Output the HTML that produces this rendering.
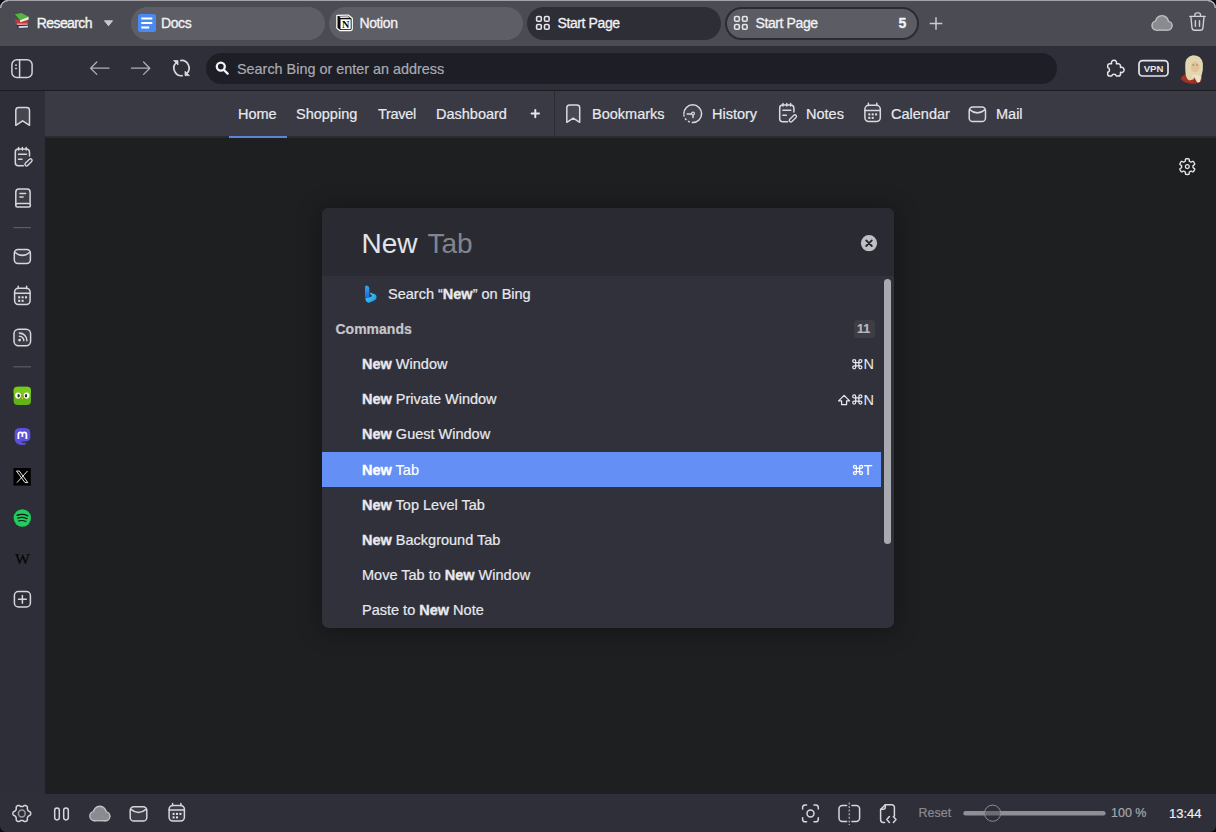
<!DOCTYPE html>
<html><head><meta charset="utf-8">
<style>
*{box-sizing:border-box;margin:0;padding:0}
html,body{width:1216px;height:832px;overflow:hidden;background:#1e1f21;font-family:"Liberation Sans",sans-serif;color:#e6e7ec}
.a{position:absolute}
.t{position:absolute;white-space:nowrap;-webkit-text-stroke:0.2px currentColor}
.t b{-webkit-text-stroke:0.35px currentColor}
#ov{position:absolute;left:0;top:0;width:1216px;height:832px}
</style></head><body>
<!-- backgrounds -->
<div class="a" style="left:0;top:0;width:1216px;height:46px;background:#4b4b53"></div>
<div class="a" style="left:0;top:0;width:1216px;height:1px;background:#a3a3a8"></div>
<div class="a" style="left:0;top:46px;width:1216px;height:44px;background:#2e2f38"></div>
<div class="a" style="left:0;top:90px;width:1216px;height:1px;background:#1b1c21"></div>
<div class="a" style="left:0;top:91px;width:45px;height:703px;background:#2d2e37"></div>
<div class="a" style="left:45px;top:91px;width:1171px;height:45px;background:#393a44"></div>
<div class="a" style="left:45px;top:136px;width:1171px;height:2px;background:#2a2b31"></div>
<div class="a" style="left:45px;top:138px;width:1171px;height:656px;background:#1e1f21"></div>
<div class="a" style="left:0;top:794px;width:1216px;height:38px;background:#2e2f38"></div>

<!-- tabs -->
<div class="a" style="left:131px;top:6.5px;width:194px;height:33px;border-radius:16.5px;background:#5d5e66"></div>
<div class="a" style="left:329px;top:6.5px;width:194px;height:33px;border-radius:16.5px;background:#5d5e66"></div>
<div class="a" style="left:527px;top:6.5px;width:194px;height:33px;border-radius:16.5px;background:#2d2e36"></div>
<div class="a" style="left:725px;top:6.5px;width:194px;height:33px;border-radius:16.5px;background:#5b5c64;border:2px solid #2b2b31"></div>
<div class="t" style="left:36.8px;top:16.2px;font-size:14px;line-height:14px;letter-spacing:-0.6px;color:#f4f4f6;-webkit-text-stroke:0.35px #f4f4f6">Research</div>
<div class="t" style="left:161px;top:16.15px;font-size:14px;line-height:14px;letter-spacing:-0.4px;color:#f2f2f5;-webkit-text-stroke:0.3px #f2f2f5">Docs</div>
<div class="t" style="left:359.5px;top:16.15px;font-size:14px;line-height:14px;letter-spacing:-0.4px;color:#f2f2f5;-webkit-text-stroke:0.3px #f2f2f5">Notion</div>
<div class="t" style="left:557.5px;top:16.15px;font-size:14px;line-height:14px;letter-spacing:-0.4px;color:#f2f2f5;-webkit-text-stroke:0.3px #f2f2f5">Start Page</div>
<div class="t" style="left:755.5px;top:16.15px;font-size:14px;line-height:14px;letter-spacing:-0.4px;color:#f2f2f5;-webkit-text-stroke:0.3px #f2f2f5">Start Page</div>
<div class="t" style="left:898.5px;top:16.15px;font-size:14px;line-height:14px;letter-spacing:-0.4px;color:#f2f2f5;-webkit-text-stroke:0.3px #f2f2f5;font-weight:bold">5</div>

<!-- address -->
<div class="a" style="left:206px;top:53px;width:851px;height:31px;border-radius:15.5px;background:#1d1e26"></div>
<div class="t" style="left:237px;top:62px;font-size:14.4px;line-height:14.4px;color:#a9aab2">Search Bing or enter an address</div>

<!-- bookmark bar text -->
<div class="a" style="left:228.5px;top:136px;width:58px;height:2px;background:#5b86d6"></div>
<div class="a" style="left:554px;top:91px;width:1px;height:45px;background:#2b2c33"></div>
<div class="t" style="left:238px;top:107px;font-size:14.5px;line-height:14.5px;color:#e8e9ee">Home</div>
<div class="t" style="left:296px;top:107px;font-size:14.5px;line-height:14.5px;color:#e8e9ee">Shopping</div>
<div class="t" style="left:378px;top:107px;font-size:14.5px;line-height:14.5px;letter-spacing:-0.3px;color:#e8e9ee">Travel</div>
<div class="t" style="left:436px;top:107px;font-size:14.5px;line-height:14.5px;color:#e8e9ee">Dashboard</div>
<div class="t" style="left:592px;top:107px;font-size:14.5px;line-height:14.5px;color:#e8e9ee">Bookmarks</div>
<div class="t" style="left:712px;top:107px;font-size:14.5px;line-height:14.5px;color:#e8e9ee">History</div>
<div class="t" style="left:806px;top:107px;font-size:14.5px;line-height:14.5px;color:#e8e9ee">Notes</div>
<div class="t" style="left:891px;top:107px;font-size:14.5px;line-height:14.5px;color:#e8e9ee">Calendar</div>
<div class="t" style="left:996px;top:107px;font-size:14.5px;line-height:14.5px;color:#e8e9ee">Mail</div>

<!-- status text -->
<div class="t" style="left:918.5px;top:807px;font-size:12.5px;line-height:12.5px;color:#8a8b92">Reset</div>
<div class="t" style="left:1111px;top:807px;font-size:12.5px;line-height:12.5px;color:#a6a7ad">100 %</div>
<div class="t" style="left:1169px;top:806.9px;font-size:13px;line-height:13px;color:#eeeef2">13:44</div>

<!-- dialog -->
<div class="a" style="left:322px;top:208px;width:572px;height:420px;border-radius:7px;background:#30313a;overflow:hidden;box-shadow:0 2px 24px rgba(0,0,0,0.4),inset 0 1px 0 rgba(255,255,255,0.05)">
  <div class="a" style="left:0;top:0;width:572px;height:68px;background:#2a2b32"></div>
  <div class="t" style="left:39.5px;top:21.8px;font-size:28px;line-height:28px;color:#e3e4ea;-webkit-text-stroke:0">New</div>
  <div class="t" style="left:105.5px;top:21.8px;font-size:28px;line-height:28px;color:#84858c;-webkit-text-stroke:0">Tab</div>
  <div class="a" style="left:0;top:243.5px;width:559px;height:35.1px;background:#648ff5"></div>
  <div class="t" style="left:66px;top:79px;font-size:14.5px;line-height:14.5px;color:#e8e9ee">Search “<b>New</b>” on Bing</div>
  <div class="t" style="left:13.5px;top:114.1px;font-size:14px;line-height:14px;color:#c5c6cc;font-weight:bold">Commands</div>
  <div class="t" style="left:40px;top:149.2px;font-size:14.5px;line-height:14.5px;color:#e8e9ee"><b>New</b> Window</div>
  <div class="t" style="left:40px;top:184.3px;font-size:14.5px;line-height:14.5px;color:#e8e9ee"><b>New</b> Private Window</div>
  <div class="t" style="left:40px;top:219.4px;font-size:14.5px;line-height:14.5px;color:#e8e9ee"><b>New</b> Guest Window</div>
  <div class="t" style="left:40px;top:254.5px;font-size:14.5px;line-height:14.5px;color:#ffffff"><b>New</b> Tab</div>
  <div class="t" style="left:40px;top:289.6px;font-size:14.5px;line-height:14.5px;color:#e8e9ee"><b>New</b> Top Level Tab</div>
  <div class="t" style="left:40px;top:324.7px;font-size:14.5px;line-height:14.5px;color:#e8e9ee"><b>New</b> Background Tab</div>
  <div class="t" style="left:40px;top:359.8px;font-size:14.5px;line-height:14.5px;color:#e8e9ee">Move Tab to <b>New</b> Window</div>
  <div class="t" style="left:40px;top:394.9px;font-size:14.5px;line-height:14.5px;color:#e8e9ee">Paste to <b>New</b> Note</div>
  <div class="a" style="left:531.5px;top:111.5px;width:21px;height:18.5px;border-radius:3px;background:#3c3d45"></div>
  <div class="t" style="left:535px;top:114.8px;font-size:12.5px;line-height:12.5px;color:#b9bac0;font-weight:bold">11</div>
  <div class="a" style="left:562px;top:70.5px;width:7px;height:265.5px;border-radius:3.5px;background:#a9aab0"></div>
</div>

<!-- ICON OVERLAY -->
<svg id="ov" width="1216" height="832" viewBox="0 0 1216 832">
<!-- window corners -->
<path d="M0 0 H8 A8 8 0 0 0 0 8 Z" fill="#0d0d0f"/>
<path d="M8 0.6 A7.4 7.4 0 0 0 0.6 8" fill="none" stroke="#b9b9be" stroke-width="1.2"/>
<path d="M1216 0 H1208 A8 8 0 0 1 1216 8 Z" fill="#0d0d0f"/>
<path d="M1208 0.6 A7.4 7.4 0 0 1 1215.4 8" fill="none" stroke="#b9b9be" stroke-width="1.2"/>

<path d="M0 832 V826 A6 6 0 0 0 6 832 Z" fill="#0d0d0f"/>
<path d="M1216 832 V826 A6 6 0 0 1 1210 832 Z" fill="#0d0d0f"/>
<!-- books emoji -->
<g>
<path d="M14.3 18.5 L16.3 18.8 L17 24 L15.2 23.5 Z" fill="#3d5aa8"/>
<path d="M15.8 19.6 L27.8 19.8 L27.8 24.6 L16.8 24.8 Z" fill="#c33a35"/>
<path d="M17 23.6 L27.6 23.4 L27.6 25 L17.2 25.2 Z" fill="#ee9c9c"/>
<path d="M16.8 25 L28.3 24.8 L28.3 28.3 L17.5 28.3 Z" fill="#2c2e52"/>
<path d="M18.5 26.2 L28 25.8 L28 27.6 L18.8 27.9 Z" fill="#dcdcf0"/>
<path d="M14.8 14.2 L21.6 12.9 L28.6 16.8 L19.9 20.2 Z" fill="#55b540"/>
<path d="M14.8 14.2 L19.9 20.2 L20.4 21.8 L15.3 16 Z" fill="#1f6e1a"/>
<path d="M19.9 20.2 L28.6 16.8 L28.6 19.6 L20.4 22.2 Z" fill="#eeeedc"/>
</g>
<path d="M104.5 20.8 H112.5 L108.5 25.8 Z" fill="#c9c9ce" stroke="#c9c9ce" stroke-width="1" stroke-linejoin="round"/>

<!-- docs icon -->
<rect x="138" y="14" width="18" height="18" rx="2.5" fill="#4a89f3"/>
<path d="M141.3 18.6 H152.3 M141.3 23 H152.3 M141.3 27.4 H149.2" stroke="#ffffff" stroke-width="2"/>

<!-- notion icon -->
<path d="M336.2 15.6 Q336.2 14.7 337.1 14.7 L348.6 14.4 L352.9 18.1 V28.6 Q352.9 31.2 350.3 31.2 H339.6 L336.2 28.3 Z" fill="#ffffff"/>
<path d="M337.5 15.9 L348.1 15.7 L351.6 18.8 V28.4 Q351.6 29.9 350 29.9 H340.1 L337.5 27.7 Z" fill="#0a0a0a"/>
<path d="M339.2 16.6 L348 16.3 L349.8 17.8 L340.6 18.1 Z" fill="#f4f4f4"/>
<rect x="340.5" y="19.3" width="10.2" height="9.9" fill="#ffffff"/>
<text x="345.6" y="27.9" font-family="Liberation Serif" font-weight="bold" font-size="10.2" text-anchor="middle" fill="#0a0a0a">N</text>
<!-- start page grid icons -->
<g fill="none" stroke="#e6e6ea" stroke-width="1.6">
<rect x="536.6" y="16.55" width="4.7" height="4.75" rx="1.3"/>
<rect x="544.5" y="16.55" width="4.6" height="4.75" rx="1.3"/>
<rect x="536.6" y="24.5" width="4.7" height="4.7" rx="1.3"/>
<rect x="544.5" y="24.5" width="4.6" height="4.7" rx="1.3"/>
<rect x="734.6" y="16.55" width="4.7" height="4.75" rx="1.3"/>
<rect x="742.5" y="16.55" width="4.6" height="4.75" rx="1.3"/>
<rect x="734.6" y="24.5" width="4.7" height="4.7" rx="1.3"/>
<rect x="742.5" y="24.5" width="4.6" height="4.7" rx="1.3"/>
</g>
<!-- new tab plus -->
<path d="M936 17.2 V29.8 M929.7 23.5 H942.3" stroke="#c9cacf" stroke-width="1.5"/>
<!-- cloud tabbar -->
<g id="cloud1">
<g fill="#c3c4c9">
<circle cx="1162" cy="22.2" r="7.2"/><circle cx="1167.6" cy="25.6" r="5.2"/><circle cx="1156.6" cy="25.5" r="5.3"/><rect x="1156.6" y="24" width="11" height="6.8"/>
</g>
<g fill="#8a8b90">
<circle cx="1162" cy="22.2" r="5.9"/><circle cx="1167.6" cy="25.6" r="3.9"/><circle cx="1156.6" cy="25.5" r="4"/><rect x="1156.6" y="24" width="11" height="5.5"/>
</g>
</g>
<!-- trash -->
<g fill="none" stroke="#cfd0d5" stroke-width="1.4" stroke-linecap="round" stroke-linejoin="round">
<path d="M1189.8 16.4 H1205.1"/>
<path d="M1194.9 16.2 V14.8 A2 2 0 0 1 1196.9 12.9 H1198.5 A2 2 0 0 1 1200.5 14.8 V16.2"/>
<path d="M1190.9 16.8 L1192 28.2 A2.3 2.3 0 0 0 1194.3 30.2 H1200.6 A2.3 2.3 0 0 0 1202.9 28.2 L1204 16.8"/>
<path d="M1195.4 20.8 V26.2 M1199.5 20.8 V26.2"/>
</g>
<!-- address bar icons -->
<g fill="none" stroke="#d3d4d9" stroke-width="1.5">
<rect x="11.9" y="59.7" width="20.2" height="17.8" rx="5"/>
<path d="M19.6 59.7 V77.5"/>
</g>
<rect x="15.1" y="64.4" width="1.8" height="1.4" fill="#d3d4d9"/>
<rect x="15.1" y="67.8" width="1.8" height="1.4" fill="#d3d4d9"/>
<g fill="none" stroke="#aeafb5" stroke-width="1.3" stroke-linecap="round" stroke-linejoin="round">
<path d="M90.8 68.2 H109 M96.8 62 L90.6 68.2 L96.8 74.4"/>
<path d="M131.5 68.2 H149.8 M143.6 62 L149.8 68.2 L143.6 74.4"/>
</g>
<g fill="none" stroke="#d9dade" stroke-width="1.7" stroke-linecap="butt">
<path d="M180.18 60.62 A7.6 7.6 0 0 1 186.87 73.47"/>
<path d="M182.82 75.58 A7.6 7.6 0 0 1 176.13 62.73"/>
</g>
<path d="M185.0 75.6 L189.4 75.6 L185.0 71.2 Z" fill="#d9dade" stroke="#d9dade" stroke-width="0.8" stroke-linejoin="round"/>
<path d="M178.0 60.6 L173.6 60.6 L178.0 65.0 Z" fill="#d9dade" stroke="#d9dade" stroke-width="0.8" stroke-linejoin="round"/>
<g fill="none" stroke="#f4f4f6" stroke-width="2.3" stroke-linecap="round">
<circle cx="220.8" cy="66.6" r="4"/>
<path d="M224 70 L227.6 73.6"/>
</g>
<!-- puzzle -->
<path d="M1110 63.8 H1111.6 A2.6 2.6 0 1 1 1116.4 63.8 H1118.3 A2.2 2.2 0 0 1 1120.5 66 V67.5 A2.6 2.6 0 1 1 1120.5 72.3 V73.9 A2.2 2.2 0 0 1 1118.3 76.1 H1116.4 A2.5 2.5 0 0 0 1111.6 76.1 H1109.9 A2.2 2.2 0 0 1 1107.7 73.9 V72.3 A2.5 2.5 0 0 0 1107.7 67.5 V66 A2.2 2.2 0 0 1 1109.9 63.8 Z" fill="none" stroke="#e6e6ea" stroke-width="1.5" stroke-linejoin="round"/>
<!-- vpn -->
<rect x="1139" y="60.6" width="29" height="15.4" rx="3.5" fill="none" stroke="#e4e4e8" stroke-width="1.7"/>
<text x="1153.6" y="72.2" font-family="Liberation Sans" font-weight="bold" font-size="9.6" text-anchor="middle" fill="#e4e4e8">VPN</text>
<!-- avatar -->
<g>
<path d="M1180.5 78.5 Q1183 74.5 1187.5 73.8 L1199 74 Q1202.5 76 1202 80 Q1199 83.6 1192 83.8 Q1184 83.4 1180.5 78.5 Z" fill="#a23222"/>
<path d="M1185.2 66 Q1184.6 57 1193 55.3 Q1201.6 55.4 1202.9 63.5 Q1203.4 70 1201.6 75.5 Q1199.5 78.5 1196 78.5 L1189.5 80.5 Q1185.8 79 1185.4 72 Z" fill="#e2d6ae"/>
<ellipse cx="1195.2" cy="66.9" rx="4.3" ry="5.4" fill="#e3c09c"/>
<path d="M1192.3 65 H1194.3 M1196.2 65 H1198" stroke="#8a6a4a" stroke-width="0.8"/>
<path d="M1191.5 75.5 L1196.5 74.5 L1201.5 76.5 L1200 82 L1195.5 83.2 Z" fill="#ece2c8"/>
<path d="M1194 77 L1197.5 83 L1193 83.5 Z" fill="#9a2e20"/>
</g>
<!-- bookmark bar icons -->
<path d="M535.3 109.9 V117.3 M531.6 113.6 H539" stroke="#e6e6ea" stroke-width="2" stroke-linecap="round"/>
<g stroke="#d9dadf" stroke-width="1.5" stroke-linejoin="round" stroke-linecap="round">
<path d="M566.8 107.5 A2.8 2.8 0 0 1 569.6 104.9 H576.9 A2.8 2.8 0 0 1 579.7 107.5 V122.3 L573.25 118.2 L566.8 122.3 Z" fill="#474852"/>
<circle cx="692.7" cy="113.7" r="8.9" fill="#42434c" stroke="none"/>
<path d="M683.8 113.7 A8.9 8.9 0 1 1 692.7 122.6" fill="none"/>
<path d="M692.7 122.6 A8.9 8.9 0 0 1 683.8 113.7" fill="none" stroke-dasharray="2 2" stroke-dashoffset="1" stroke-linecap="butt"/>
<path d="M687.2 114 H691.2" fill="none"/>
<circle cx="693" cy="113.6" r="1.4" fill="none" stroke-width="1.2"/>
<path d="M693 115 V117.6" fill="none"/>
<g transform="translate(764.4 -44)">
<path d="M23.3 165.7 H18.3 A3 3 0 0 1 15.3 162.7 V152 A3 3 0 0 1 18.3 149 H26.5 A3 3 0 0 1 29.5 152 V155.9" fill="#41424b"/>
<path d="M18.6 147.6 V150 M22.4 147.6 V150 M26.2 147.6 V150 M18.5 154.3 H26.4 M18.5 159.3 H22" fill="none"/>
<rect x="-4.4" y="-1.55" width="8.8" height="3.1" rx="1.55" transform="translate(28.5 162.3) rotate(-45)" fill="none" stroke-width="1.4"/>
</g>
<rect x="864.9" y="105.3" width="15.4" height="16.3" rx="3.8" fill="#41424b"/>
<path d="M864.9 110.4 H880.3 M868.4 103.3 V105.5 M876.8 103.3 V105.5" fill="none"/>
<rect x="969.2" y="107.1" width="16.3" height="14.4" rx="3.6" fill="#42434c"/>
<path d="M969.6 109.6 Q977.3 116.2 985.1 109.6" fill="none"/>
</g>
<g fill="#e4e4e8">
<rect x="868.3" y="113.4" width="2" height="2"/><rect x="871.7" y="113.4" width="2" height="2"/><rect x="875.1" y="113.4" width="2" height="2"/>
<rect x="868.3" y="116.9" width="2" height="2"/><rect x="871.7" y="116.9" width="2" height="2"/>
</g>

<!-- sidebar icons -->
<g stroke="#d6d7dc" stroke-width="1.5" stroke-linejoin="round" stroke-linecap="round">
<path d="M15.8 110.2 A2.8 2.8 0 0 1 18.6 107.5 H26.7 A2.8 2.8 0 0 1 29.5 110.2 V125.3 L22.65 120.8 L15.8 125.3 Z" fill="#45464f"/>
<!-- notes -->
<g id="notesic">
<path d="M23.3 165.7 H18.3 A3 3 0 0 1 15.3 162.7 V152 A3 3 0 0 1 18.3 149 H26.5 A3 3 0 0 1 29.5 152 V155.9" fill="#3b3c45"/>
<path d="M18.6 147.6 V150 M22.4 147.6 V150 M26.2 147.6 V150 M18.5 154.3 H26.4 M18.5 159.3 H22" fill="none"/>
<rect x="-4.4" y="-1.55" width="8.8" height="3.1" rx="1.55" transform="translate(28.5 162.3) rotate(-45)" fill="none" stroke-width="1.4"/>
</g>
<!-- book -->
<path d="M15.8 204.5 V192 A3 3 0 0 1 18.8 189.1 H27.1 A3 3 0 0 1 30.1 192 V203.4" fill="#3b3c45"/>
<rect x="15.8" y="203.4" width="14.6" height="3.5" rx="1.75" fill="none"/>
<path d="M19.9 193.4 H25.6 M19.9 197.1 H23.1" fill="none"/>
<!-- mail -->
<rect x="14.3" y="249.6" width="16.1" height="13.8" rx="3.6" fill="#3c3d46"/>
<path d="M14.8 252.2 Q22.35 258.6 29.9 252.2" fill="none"/>
<!-- calendar -->
<rect x="14.6" y="288.2" width="15.5" height="16.4" rx="3.8" fill="#3b3c45"/>
<path d="M14.6 293.2 H30.1 M18.2 286.3 V288.5 M26.6 286.3 V288.5" fill="none"/>
<!-- rss -->
<rect x="14" y="329.2" width="16.6" height="16.5" rx="4.5" fill="#3b3c45"/>
<path d="M19.4 336.2 A4.4 4.4 0 0 1 23.8 340.6 M19.4 333.1 A7.5 7.5 0 0 1 26.9 340.6" fill="none" stroke-width="1.55"/>
<!-- add -->
<rect x="14.4" y="591.6" width="16" height="15.4" rx="4" fill="none"/>
<path d="M22.4 595.4 V603.2 M18.5 599.3 H26.3" fill="none"/>
</g>
<circle cx="19.6" cy="340.1" r="1.35" fill="#e0e1e5"/>
<g fill="#e4e4e8">
<rect x="18.2" y="296.3" width="2" height="2"/><rect x="21.6" y="296.3" width="2" height="2"/><rect x="25" y="296.3" width="2" height="2"/>
<rect x="18.2" y="299.8" width="2" height="2"/><rect x="21.6" y="299.8" width="2" height="2"/>
</g>
<path d="M13.5 227.6 H31" stroke="#5c5d65" stroke-width="1.2"/>
<path d="M13.5 366.8 H31" stroke="#5c5d65" stroke-width="1.2"/>
<!-- duolingo -->
<rect x="13.6" y="386.8" width="17.4" height="18.2" rx="4" fill="#62b316"/>
<rect x="13.6" y="386.8" width="17.4" height="9" rx="4" fill="#7ac81c"/>
<ellipse cx="18" cy="395.6" rx="2.9" ry="3.1" fill="#ffffff"/>
<ellipse cx="26.6" cy="395.6" rx="2.9" ry="3.1" fill="#ffffff"/>
<ellipse cx="18.6" cy="395.8" rx="1.2" ry="1.7" fill="#2b2b2b"/>
<ellipse cx="26" cy="395.8" rx="1.2" ry="1.7" fill="#2b2b2b"/>
<path d="M20.6 397.2 H24 L22.3 399.6 Z" fill="#f5a623"/>
<!-- mastodon -->
<path d="M14.6 433 Q14.6 428.2 19.5 428 H25.5 Q30.3 428.2 30.3 433 V437.5 Q30.3 441 26 441.5 H21 Q22 443 25.5 443 L26.5 443.2 Q25 445.5 21 445 Q14.6 444 14.6 438 Z" fill="#5c50dc"/>
<path d="M18.4 439 V434.4 A2 2 0 0 1 22.4 434.4 V437 M22.4 437 V434.4 A2 2 0 0 1 26.4 434.4 V439" fill="none" stroke="#ffffff" stroke-width="1.8"/>
<!-- X -->
<rect x="13.5" y="468" width="17.3" height="17.6" fill="#000000"/>
<path d="M16.5 471 L25 482.6 H27.8 L19.3 471 Z" fill="none" stroke="#ffffff" stroke-width="0.9"/>
<path d="M27.5 471 L17 482.6" stroke="#ffffff" stroke-width="0.9"/>
<!-- spotify -->
<circle cx="22.3" cy="518" r="8.7" fill="#21cc5e"/>
<g fill="none" stroke="#141414" stroke-linecap="round">
<path d="M17.2 515.2 Q22.6 513.3 27.8 515.8" stroke-width="1.45"/>
<path d="M17.8 518.1 Q22.5 516.6 27 518.7" stroke-width="1.25"/>
<path d="M18.4 520.9 Q22.3 519.8 26.1 521.4" stroke-width="1.05"/>
</g>
<!-- wikipedia -->
<text x="14.9" y="564" font-family="Liberation Serif" font-size="13.6" textLength="14.9" lengthAdjust="spacingAndGlyphs" fill="#050505" stroke="#050505" stroke-width="0.15">W</text>

<!-- content gear -->
<g id="gear1" fill="none" stroke="#e6e6ea" stroke-width="1.35" stroke-linejoin="round">
<path d="M1193.01 166.60 L1193.01 166.70 L1193.00 166.80 L1193.00 166.90 L1193.00 167.00 L1192.99 167.10 L1192.99 167.20 L1192.99 167.30 L1193.00 167.40 L1193.03 167.51 L1193.09 167.62 L1193.20 167.75 L1193.41 167.90 L1193.71 168.08 L1194.07 168.29 L1194.38 168.50 L1194.59 168.69 L1194.70 168.86 L1194.73 169.01 L1194.73 169.16 L1194.70 169.29 L1194.66 169.43 L1194.62 169.56 L1194.57 169.69 L1194.51 169.81 L1194.46 169.94 L1194.40 170.06 L1194.34 170.19 L1194.27 170.31 L1194.21 170.43 L1194.14 170.55 L1194.07 170.67 L1194.00 170.79 L1193.92 170.90 L1193.85 171.02 L1193.77 171.13 L1193.69 171.24 L1193.61 171.35 L1193.52 171.46 L1193.43 171.56 L1193.33 171.66 L1193.23 171.75 L1193.11 171.83 L1192.96 171.87 L1192.75 171.87 L1192.48 171.78 L1192.14 171.62 L1191.79 171.41 L1191.48 171.24 L1191.24 171.14 L1191.08 171.10 L1190.95 171.11 L1190.84 171.14 L1190.75 171.18 L1190.66 171.23 L1190.58 171.28 L1190.49 171.33 L1190.41 171.39 L1190.32 171.44 L1190.24 171.49 L1190.15 171.54 L1190.07 171.59 L1189.98 171.64 L1189.89 171.69 L1189.80 171.73 L1189.72 171.78 L1189.63 171.83 L1189.54 171.88 L1189.46 171.94 L1189.38 172.01 L1189.31 172.12 L1189.26 172.29 L1189.23 172.54 L1189.22 172.89 L1189.22 173.30 L1189.20 173.68 L1189.13 173.96 L1189.04 174.14 L1188.92 174.24 L1188.80 174.31 L1188.67 174.36 L1188.53 174.39 L1188.40 174.42 L1188.26 174.44 L1188.13 174.45 L1187.99 174.47 L1187.85 174.48 L1187.71 174.49 L1187.58 174.49 L1187.44 174.50 L1187.30 174.50 L1187.16 174.50 L1187.02 174.49 L1186.89 174.49 L1186.75 174.48 L1186.61 174.47 L1186.47 174.45 L1186.34 174.44 L1186.20 174.42 L1186.07 174.39 L1185.93 174.36 L1185.80 174.31 L1185.68 174.24 L1185.56 174.14 L1185.47 173.96 L1185.40 173.68 L1185.38 173.30 L1185.38 172.89 L1185.37 172.54 L1185.34 172.29 L1185.29 172.12 L1185.22 172.01 L1185.14 171.94 L1185.06 171.88 L1184.97 171.83 L1184.88 171.78 L1184.80 171.73 L1184.71 171.69 L1184.62 171.64 L1184.53 171.59 L1184.45 171.54 L1184.36 171.49 L1184.28 171.44 L1184.19 171.39 L1184.11 171.33 L1184.02 171.28 L1183.94 171.23 L1183.85 171.18 L1183.76 171.14 L1183.65 171.11 L1183.52 171.10 L1183.36 171.14 L1183.12 171.24 L1182.81 171.41 L1182.46 171.62 L1182.12 171.78 L1181.85 171.87 L1181.64 171.87 L1181.49 171.83 L1181.37 171.75 L1181.27 171.66 L1181.17 171.56 L1181.08 171.46 L1180.99 171.35 L1180.91 171.24 L1180.83 171.13 L1180.75 171.02 L1180.68 170.90 L1180.60 170.79 L1180.53 170.67 L1180.46 170.55 L1180.39 170.43 L1180.33 170.31 L1180.26 170.19 L1180.20 170.06 L1180.14 169.94 L1180.09 169.81 L1180.03 169.69 L1179.98 169.56 L1179.94 169.43 L1179.90 169.29 L1179.87 169.16 L1179.87 169.01 L1179.90 168.86 L1180.01 168.69 L1180.22 168.50 L1180.53 168.29 L1180.89 168.08 L1181.19 167.90 L1181.40 167.75 L1181.51 167.62 L1181.57 167.51 L1181.60 167.40 L1181.61 167.30 L1181.61 167.20 L1181.61 167.10 L1181.60 167.00 L1181.60 166.90 L1181.60 166.80 L1181.59 166.70 L1181.59 166.60 L1181.59 166.50 L1181.60 166.40 L1181.60 166.30 L1181.60 166.20 L1181.61 166.10 L1181.61 166.00 L1181.61 165.90 L1181.60 165.80 L1181.57 165.69 L1181.51 165.58 L1181.40 165.45 L1181.19 165.30 L1180.89 165.12 L1180.53 164.91 L1180.22 164.70 L1180.01 164.51 L1179.90 164.34 L1179.87 164.19 L1179.87 164.04 L1179.90 163.91 L1179.94 163.77 L1179.98 163.64 L1180.03 163.51 L1180.09 163.39 L1180.14 163.26 L1180.20 163.14 L1180.26 163.01 L1180.33 162.89 L1180.39 162.77 L1180.46 162.65 L1180.53 162.53 L1180.60 162.41 L1180.68 162.30 L1180.75 162.18 L1180.83 162.07 L1180.91 161.96 L1180.99 161.85 L1181.08 161.74 L1181.17 161.64 L1181.27 161.54 L1181.37 161.45 L1181.49 161.37 L1181.64 161.33 L1181.85 161.33 L1182.12 161.42 L1182.46 161.58 L1182.81 161.79 L1183.12 161.96 L1183.36 162.06 L1183.52 162.10 L1183.65 162.09 L1183.76 162.06 L1183.85 162.02 L1183.94 161.97 L1184.02 161.92 L1184.11 161.87 L1184.19 161.81 L1184.28 161.76 L1184.36 161.71 L1184.45 161.66 L1184.53 161.61 L1184.62 161.56 L1184.71 161.51 L1184.80 161.47 L1184.88 161.42 L1184.97 161.37 L1185.06 161.32 L1185.14 161.26 L1185.22 161.19 L1185.29 161.08 L1185.34 160.91 L1185.37 160.66 L1185.38 160.31 L1185.38 159.90 L1185.40 159.52 L1185.47 159.24 L1185.56 159.06 L1185.68 158.96 L1185.80 158.89 L1185.93 158.84 L1186.07 158.81 L1186.20 158.78 L1186.34 158.76 L1186.47 158.75 L1186.61 158.73 L1186.75 158.72 L1186.89 158.71 L1187.02 158.71 L1187.16 158.70 L1187.30 158.70 L1187.44 158.70 L1187.58 158.71 L1187.71 158.71 L1187.85 158.72 L1187.99 158.73 L1188.13 158.75 L1188.26 158.76 L1188.40 158.78 L1188.53 158.81 L1188.67 158.84 L1188.80 158.89 L1188.92 158.96 L1189.04 159.06 L1189.13 159.24 L1189.20 159.52 L1189.22 159.90 L1189.22 160.31 L1189.23 160.66 L1189.26 160.91 L1189.31 161.08 L1189.38 161.19 L1189.46 161.26 L1189.54 161.32 L1189.63 161.37 L1189.72 161.42 L1189.80 161.47 L1189.89 161.51 L1189.98 161.56 L1190.07 161.61 L1190.15 161.66 L1190.24 161.71 L1190.32 161.76 L1190.41 161.81 L1190.49 161.87 L1190.58 161.92 L1190.66 161.97 L1190.75 162.02 L1190.84 162.06 L1190.95 162.09 L1191.08 162.10 L1191.24 162.06 L1191.48 161.96 L1191.79 161.79 L1192.14 161.58 L1192.48 161.42 L1192.75 161.33 L1192.96 161.33 L1193.11 161.37 L1193.23 161.45 L1193.33 161.54 L1193.43 161.64 L1193.52 161.74 L1193.61 161.85 L1193.69 161.96 L1193.77 162.07 L1193.85 162.18 L1193.92 162.30 L1194.00 162.41 L1194.07 162.53 L1194.14 162.65 L1194.21 162.77 L1194.27 162.89 L1194.34 163.01 L1194.40 163.14 L1194.46 163.26 L1194.51 163.39 L1194.57 163.51 L1194.62 163.64 L1194.66 163.77 L1194.70 163.91 L1194.73 164.04 L1194.73 164.19 L1194.70 164.34 L1194.59 164.51 L1194.38 164.70 L1194.07 164.91 L1193.71 165.12 L1193.41 165.30 L1193.20 165.45 L1193.09 165.58 L1193.03 165.69 L1193.00 165.80 L1192.99 165.90 L1192.99 166.00 L1192.99 166.10 L1193.00 166.20 L1193.00 166.30 L1193.00 166.40 L1193.01 166.50 Z"/>
<circle cx="1187.3" cy="166.6" r="1.9" stroke-width="1.25"/>
</g>

<!-- close button -->
<circle cx="869" cy="243.2" r="8.1" fill="#bfc0c6"/>
<path d="M866.2 240.4 L871.8 246 M871.8 240.4 L866.2 246" stroke="#23242a" stroke-width="1.8" stroke-linecap="round"/>

<!-- bing -->
<defs>
<linearGradient id="bg1" x1="0" y1="0" x2="0" y2="1"><stop offset="0" stop-color="#2fa8ef"/><stop offset="1" stop-color="#1a5fe0"/></linearGradient>
<linearGradient id="bg2" x1="0" y1="0" x2="1" y2="1"><stop offset="0" stop-color="#47d8f5"/><stop offset="1" stop-color="#1b8fe8"/></linearGradient>
</defs>
<path d="M365 287.6 Q365 285 367.4 285.8 Q369.3 286.5 369.3 288.6 V297.6 L366.6 299.6 Q365 298.4 365 296.5 Z" fill="url(#bg1)"/>
<path d="M369.7 292.4 L374.8 294.3 Q376.8 295.2 376.6 297.2 Q376.4 299 374.8 300.2 L370.4 302.3 Q368.4 303.3 366.6 301.7 Q365.1 300.1 365.4 298.6 L369.3 297.6 L372.3 296 L370.6 294.6 Z" fill="url(#bg2)"/>

<!-- shortcut glyphs -->
<g fill="none" stroke="#e8e9ee" stroke-width="1.25">
<path d="M855.6999999999999 362.59999999999997 H858.9 V365.8 H855.6999999999999 Z M855.6999999999999 362.59999999999997 H854.1999999999999 A1.5 1.5 0 1 1 855.6999999999999 361.09999999999997 Z M858.9 362.59999999999997 V361.09999999999997 A1.5 1.5 0 1 1 860.4 362.59999999999997 Z M858.9 365.8 H860.4 A1.5 1.5 0 1 1 858.9 367.3 Z M855.6999999999999 365.8 V367.3 A1.5 1.5 0 1 1 854.1999999999999 365.8 Z"/>
<path d="M855.6999999999999 397.9 H858.9 V401.1 H855.6999999999999 Z M855.6999999999999 397.9 H854.1999999999999 A1.5 1.5 0 1 1 855.6999999999999 396.4 Z M858.9 397.9 V396.4 A1.5 1.5 0 1 1 860.4 397.9 Z M858.9 401.1 H860.4 A1.5 1.5 0 1 1 858.9 402.6 Z M855.6999999999999 401.1 V402.6 A1.5 1.5 0 1 1 854.1999999999999 401.1 Z"/>
<path d="M844.1 395.4 L849.6 400.9 H846.6 V404.5 H841.6 V400.9 H838.6 Z" stroke-linejoin="round"/>
</g>
<g fill="none" stroke="#ffffff" stroke-width="1.25">
<path d="M856.4 468.29999999999995 H859.6 V471.5 H856.4 Z M856.4 468.29999999999995 H854.9 A1.5 1.5 0 1 1 856.4 466.79999999999995 Z M859.6 468.29999999999995 V466.79999999999995 A1.5 1.5 0 1 1 861.1 468.29999999999995 Z M859.6 471.5 H861.1 A1.5 1.5 0 1 1 859.6 473.0 Z M856.4 471.5 V473.0 A1.5 1.5 0 1 1 854.9 471.5 Z"/>
</g>
<g font-family="Liberation Sans" font-size="14.5" fill="#e8e9ee">
<text x="863.6" y="369.4">N</text>
<text x="863.6" y="404.7">N</text>
<text x="863.6" y="475.1" fill="#ffffff">T</text>
</g>


<!-- status bar icons -->
<g fill="none" stroke="#d6d7dc" stroke-width="1.5" stroke-linejoin="round" stroke-linecap="round">
<path d="M30.70 813.50 L30.70 813.66 L30.69 813.81 L30.67 813.96 L30.64 814.12 L30.60 814.27 L30.56 814.42 L30.50 814.57 L30.42 814.71 L30.33 814.85 L30.22 814.99 L30.10 815.11 L29.95 815.23 L29.79 815.34 L29.61 815.45 L29.43 815.54 L29.25 815.64 L29.07 815.72 L28.90 815.81 L28.75 815.89 L28.61 815.98 L28.49 816.07 L28.38 816.16 L28.28 816.25 L28.19 816.35 L28.11 816.44 L28.04 816.54 L27.97 816.64 L27.90 816.74 L27.84 816.85 L27.78 816.95 L27.72 817.05 L27.66 817.16 L27.60 817.27 L27.55 817.38 L27.50 817.49 L27.46 817.61 L27.42 817.74 L27.39 817.87 L27.37 818.01 L27.35 818.16 L27.35 818.32 L27.35 818.50 L27.36 818.68 L27.37 818.88 L27.39 819.09 L27.39 819.29 L27.39 819.50 L27.38 819.69 L27.35 819.88 L27.30 820.05 L27.24 820.21 L27.16 820.36 L27.07 820.50 L26.97 820.62 L26.87 820.74 L26.75 820.85 L26.64 820.95 L26.51 821.04 L26.38 821.13 L26.25 821.21 L26.11 821.28 L25.97 821.35 L25.83 821.41 L25.68 821.46 L25.53 821.51 L25.38 821.54 L25.22 821.56 L25.06 821.57 L24.90 821.56 L24.73 821.54 L24.55 821.49 L24.38 821.43 L24.20 821.34 L24.02 821.24 L23.84 821.13 L23.67 821.02 L23.51 820.91 L23.35 820.80 L23.20 820.71 L23.06 820.64 L22.92 820.57 L22.79 820.52 L22.66 820.49 L22.53 820.46 L22.41 820.44 L22.28 820.42 L22.16 820.41 L22.04 820.41 L21.92 820.40 L21.80 820.40 L21.68 820.40 L21.56 820.41 L21.44 820.41 L21.32 820.42 L21.19 820.44 L21.07 820.46 L20.94 820.49 L20.81 820.52 L20.68 820.57 L20.54 820.64 L20.40 820.71 L20.25 820.80 L20.09 820.91 L19.93 821.02 L19.76 821.13 L19.58 821.24 L19.40 821.34 L19.22 821.43 L19.05 821.49 L18.87 821.54 L18.70 821.56 L18.54 821.57 L18.38 821.56 L18.22 821.54 L18.07 821.51 L17.92 821.46 L17.77 821.41 L17.63 821.35 L17.49 821.28 L17.35 821.21 L17.22 821.13 L17.09 821.04 L16.96 820.95 L16.85 820.85 L16.73 820.74 L16.63 820.62 L16.53 820.50 L16.44 820.36 L16.36 820.21 L16.30 820.05 L16.25 819.88 L16.22 819.69 L16.21 819.50 L16.21 819.29 L16.21 819.09 L16.23 818.88 L16.24 818.68 L16.25 818.50 L16.25 818.32 L16.25 818.16 L16.23 818.01 L16.21 817.87 L16.18 817.74 L16.14 817.61 L16.10 817.49 L16.05 817.38 L16.00 817.27 L15.94 817.16 L15.88 817.05 L15.82 816.95 L15.76 816.85 L15.70 816.74 L15.63 816.64 L15.56 816.54 L15.49 816.44 L15.41 816.35 L15.32 816.25 L15.22 816.16 L15.11 816.07 L14.99 815.98 L14.85 815.89 L14.70 815.81 L14.53 815.72 L14.35 815.64 L14.17 815.54 L13.99 815.45 L13.81 815.34 L13.65 815.23 L13.50 815.11 L13.38 814.99 L13.27 814.85 L13.18 814.71 L13.10 814.57 L13.04 814.42 L13.00 814.27 L12.96 814.12 L12.93 813.96 L12.91 813.81 L12.90 813.66 L12.90 813.50 L12.90 813.34 L12.91 813.19 L12.93 813.04 L12.96 812.88 L13.00 812.73 L13.04 812.58 L13.10 812.43 L13.18 812.29 L13.27 812.15 L13.38 812.01 L13.50 811.89 L13.65 811.77 L13.81 811.66 L13.99 811.55 L14.17 811.46 L14.35 811.36 L14.53 811.28 L14.70 811.19 L14.85 811.11 L14.99 811.02 L15.11 810.93 L15.22 810.84 L15.32 810.75 L15.41 810.65 L15.49 810.56 L15.56 810.46 L15.63 810.36 L15.70 810.26 L15.76 810.15 L15.82 810.05 L15.88 809.95 L15.94 809.84 L16.00 809.73 L16.05 809.62 L16.10 809.51 L16.14 809.39 L16.18 809.26 L16.21 809.13 L16.23 808.99 L16.25 808.84 L16.25 808.68 L16.25 808.50 L16.24 808.32 L16.23 808.12 L16.21 807.91 L16.21 807.71 L16.21 807.50 L16.22 807.31 L16.25 807.12 L16.30 806.95 L16.36 806.79 L16.44 806.64 L16.53 806.50 L16.63 806.38 L16.73 806.26 L16.85 806.15 L16.96 806.05 L17.09 805.96 L17.22 805.87 L17.35 805.79 L17.49 805.72 L17.63 805.65 L17.77 805.59 L17.92 805.54 L18.07 805.49 L18.22 805.46 L18.38 805.44 L18.54 805.43 L18.70 805.44 L18.87 805.46 L19.05 805.51 L19.22 805.57 L19.40 805.66 L19.58 805.76 L19.76 805.87 L19.93 805.98 L20.09 806.09 L20.25 806.20 L20.40 806.29 L20.54 806.36 L20.68 806.43 L20.81 806.48 L20.94 806.51 L21.07 806.54 L21.19 806.56 L21.32 806.58 L21.44 806.59 L21.56 806.59 L21.68 806.60 L21.80 806.60 L21.92 806.60 L22.04 806.59 L22.16 806.59 L22.28 806.58 L22.41 806.56 L22.53 806.54 L22.66 806.51 L22.79 806.48 L22.92 806.43 L23.06 806.36 L23.20 806.29 L23.35 806.20 L23.51 806.09 L23.67 805.98 L23.84 805.87 L24.02 805.76 L24.20 805.66 L24.38 805.57 L24.55 805.51 L24.73 805.46 L24.90 805.44 L25.06 805.43 L25.22 805.44 L25.38 805.46 L25.53 805.49 L25.68 805.54 L25.83 805.59 L25.97 805.65 L26.11 805.72 L26.25 805.79 L26.38 805.87 L26.51 805.96 L26.64 806.05 L26.75 806.15 L26.87 806.26 L26.97 806.38 L27.07 806.50 L27.16 806.64 L27.24 806.79 L27.30 806.95 L27.35 807.12 L27.38 807.31 L27.39 807.50 L27.39 807.71 L27.39 807.91 L27.37 808.12 L27.36 808.32 L27.35 808.50 L27.35 808.68 L27.35 808.84 L27.37 808.99 L27.39 809.13 L27.42 809.26 L27.46 809.39 L27.50 809.51 L27.55 809.62 L27.60 809.73 L27.66 809.84 L27.72 809.95 L27.78 810.05 L27.84 810.15 L27.90 810.26 L27.97 810.36 L28.04 810.46 L28.11 810.56 L28.19 810.65 L28.28 810.75 L28.38 810.84 L28.49 810.93 L28.61 811.02 L28.75 811.11 L28.90 811.19 L29.07 811.28 L29.25 811.36 L29.43 811.46 L29.61 811.55 L29.79 811.66 L29.95 811.77 L30.10 811.89 L30.22 812.01 L30.33 812.15 L30.42 812.29 L30.50 812.43 L30.56 812.58 L30.60 812.73 L30.64 812.88 L30.67 813.04 L30.69 813.19 L30.70 813.34 Z"/>
<rect x="54.7" y="807.9" width="4.6" height="12" rx="2.3"/>
<rect x="63.7" y="807.9" width="4.6" height="12" rx="2.3"/>
<rect x="130.2" y="806.7" width="16.6" height="14.4" rx="3.6" fill="#3c3d46"/>
<path d="M130.6 809.2 Q138.5 815.8 146.4 809.2"/>
<rect x="169.1" y="805.4" width="15.3" height="15.7" rx="3.8" fill="#3b3c45"/>
<path d="M169.1 810 H184.4 M172.6 803.6 V805.6 M180.9 803.6 V805.6"/>
<!-- capture -->
<path d="M802.6 809 V807.6 A2.6 2.6 0 0 1 805.2 805 H806.6 M814 805 H815.7 A2.6 2.6 0 0 1 818.3 807.6 V809 M818.3 817.8 V819.2 A2.6 2.6 0 0 1 815.7 821.8 H814 M806.6 821.8 H805.2 A2.6 2.6 0 0 1 802.6 819.2 V817.8"/>
<circle cx="810.5" cy="813.4" r="3.5"/>
<!-- split -->
<path d="M846.6 805.6 H842.4 A3.4 3.4 0 0 0 839 809 V818 A3.4 3.4 0 0 0 842.4 821.4 H846.6 M852 805.6 H856.2 A3.4 3.4 0 0 1 859.6 809 V818 A3.4 3.4 0 0 1 856.2 821.4 H852"/>
<path d="M849.3 802.4 V825" stroke="#9d9ea4" stroke-dasharray="2 1.6" stroke-linecap="butt"/>
<!-- page code -->
<path d="M884.6 822.4 H883.2 A2.6 2.6 0 0 1 880.6 819.8 V809.6 L885.3 804.7 H891.8 A2.6 2.6 0 0 1 894.4 807.3 V816"/>
<path d="M885.3 804.7 V807.2 A2 2 0 0 1 883.3 809.2 H880.8"/>
<path d="M889.4 816.6 L886.8 819.6 L889.4 822.5 M893.4 816.6 L896 819.6 L893.4 822.5"/>
</g>
<circle cx="21.8" cy="813.5" r="3.4" fill="none" stroke="#9c9da3" stroke-width="1.5"/>
<use href="#cloud1" transform="translate(-1062.2 790.6)"/>
<g fill="#e4e4e8">
<rect x="172.6" y="812.9" width="2" height="2"/><rect x="176" y="812.9" width="2" height="2"/><rect x="179.4" y="812.9" width="2" height="2"/>
<rect x="172.6" y="816.4" width="2" height="2"/><rect x="176" y="816.4" width="2" height="2"/>
</g>
<!-- slider -->
<path d="M965.5 813.2 H1103.4" stroke="#8f9096" stroke-width="4.4" stroke-linecap="round"/>
<circle cx="992.6" cy="813.2" r="8.1" fill="#2e2f38" fill-opacity="0.35" stroke="#8e8f95" stroke-width="1"/>
</svg>
</body></html>
